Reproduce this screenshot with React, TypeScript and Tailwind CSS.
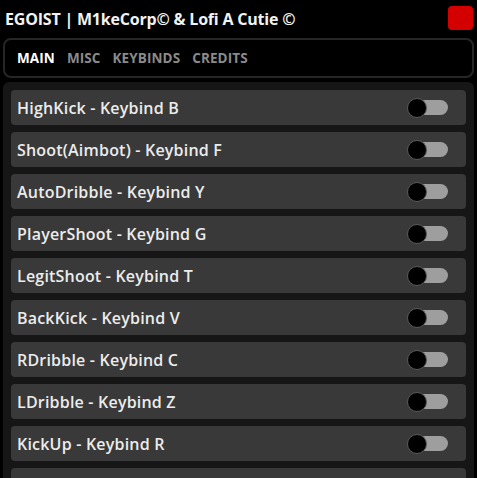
import React, { useState } from 'react';

const features = [
  'HighKick - Keybind B',
  'Shoot(Aimbot) - Keybind F',
  'AutoDribble - Keybind Y',
  'PlayerShoot - Keybind G',
  'LegitShoot - Keybind T',
  'BackKick - Keybind V',
  'RDribble - Keybind C',
  'LDribble - Keybind Z',
  'KickUp - Keybind R',
];

const tabs = ['MAIN', 'MISC', 'KEYBINDS', 'CREDITS'];

function Toggle({ on, onClick }: { on: boolean; onClick: () => void }) {
  return (
    <button onClick={onClick} className="relative w-[41px] h-[20px] flex items-center">
      <span className="absolute left-[10px] right-0 h-[15px] rounded-full bg-[#9e9e9e]" />
      <span
        className={`absolute top-0 w-[20px] h-[20px] rounded-full bg-black border border-[#5a5a5a] ${on ? 'left-[21px]' : 'left-0'}`}
      />
    </button>
  );
}

export default function App() {
  const [tab, setTab] = useState('MAIN');
  const [enabled, setEnabled] = useState<Record<string, boolean>>({});

  return (
    <div
      className="w-[477px] h-[478px] bg-black overflow-hidden flex flex-col"
      style={{ fontFamily: '"Open Sans", "Noto Sans", sans-serif' }}
    >
      {/* title bar */}
      <div className="h-[38px] flex items-center justify-between pl-[5px] pr-[4px]">
        <span className="text-[16px] font-bold text-[#f2f2f2] tracking-[-0.2px]">
          EGOIST | M1keCorp© &amp; Lofi A Cutie ©
        </span>
        <button className="w-[25px] h-[24px] rounded-[4px] bg-[#d40000] mb-[2px]" />
      </div>

      {/* tabs */}
      <div className="mx-[3px] h-[40px] rounded-[8px] bg-black border-2 border-[#262626] flex items-center gap-[12px] px-[12px]">
        {tabs.map(t => (
          <button
            key={t}
            onClick={() => setTab(t)}
            className={`text-[13.5px] font-bold tracking-[0.1px] ${tab === t ? 'text-white' : 'text-[#8a8a8a]'}`}
          >
            {t}
          </button>
        ))}
      </div>

      {/* list */}
      <div className="mx-[3px] mt-[4px] flex-1 bg-[#161616] rounded-t-[6px] overflow-hidden px-[8px] pt-[8px] flex flex-col gap-[7px]">
        {features.map(f => (
          <div
            key={f}
            className="h-[35px] shrink-0 rounded-[4px] bg-[#393939] flex items-center justify-between pl-[6px] pr-[18px]"
          >
            <span className="text-[16px] font-semibold text-[#ececec] tracking-[0.2px]">{f}</span>
            <Toggle on={!!enabled[f]} onClick={() => setEnabled(e => ({ ...e, [f]: !e[f] }))} />
          </div>
        ))}
        {/* next row, scrolled out of view */}
        <div className="h-[35px] shrink-0 rounded-[4px] bg-[#393939]" />
      </div>
    </div>
  );
}
